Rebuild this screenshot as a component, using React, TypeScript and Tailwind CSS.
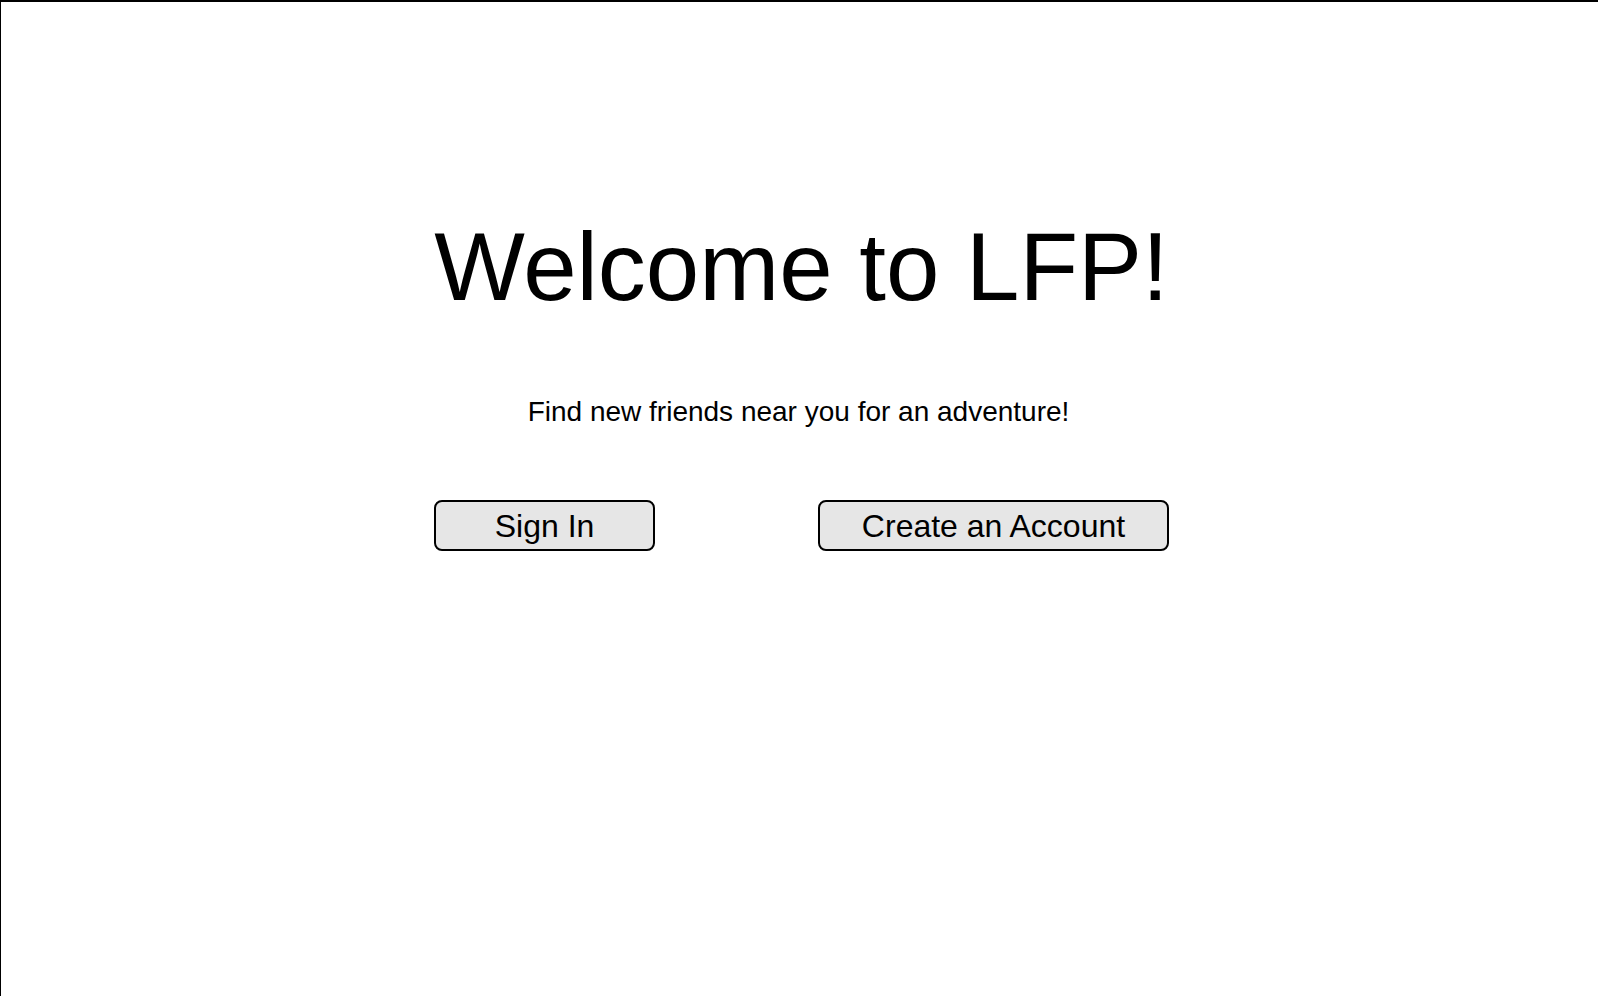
import React from 'react';

const App: React.FC = () => {
  return (
    <div className="min-h-screen bg-white border-t-2 border-l border-black font-['Liberation_Sans',Arial,sans-serif] text-black">
      <div className="flex flex-col items-center pt-[217px]">
        <h1 className="ml-[4px] text-[96px] leading-[96px] font-normal">Welcome to LFP!</h1>

        <p className="mt-[83px] mr-[2px] text-[28px] leading-[28px]">Find new friends near you for an adventure!</p>

        <div className="mt-[74px] ml-[4px] flex items-center gap-[163px]">
          <button className="w-[221px] h-[51px] bg-[#e6e6e6] border-2 border-black rounded-lg text-[32px] leading-none">
            Sign In
          </button>
          <button className="w-[351px] h-[51px] bg-[#e6e6e6] border-2 border-black rounded-lg text-[32px] leading-none">
            Create an Account
          </button>
        </div>
      </div>
    </div>
  );
};

export default App;
